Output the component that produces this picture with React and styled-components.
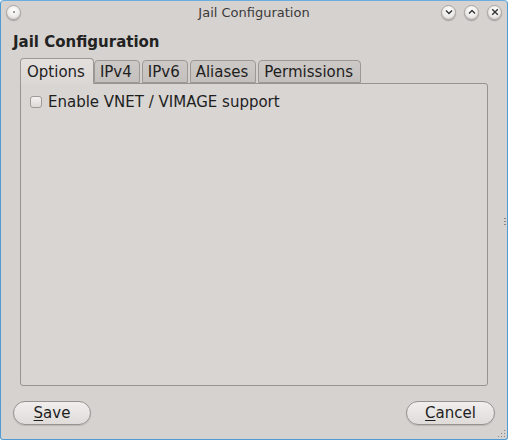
import React, { useState } from 'react';
import styled, { createGlobalStyle } from 'styled-components';

const Global = createGlobalStyle`
  html, body {
    margin: 0;
    padding: 0;
    background: #ffffff;
  }
  body {
    font-family: 'DejaVu Sans', 'Liberation Sans', sans-serif;
  }
`;

const Window = styled.div`
  width: 508px;
  height: 440px;
  box-sizing: border-box;
  border: 1px solid #4e9bd5;
  border-top: 1px solid #6aaedf;
  border-radius: 4px 4px 3px 3px;
  background: #d6d2d0;
  display: flex;
  flex-direction: column;
  position: relative;
  overflow: hidden;
`;

const TitleBar = styled.div`
  height: 22px;
  display: grid;
  grid-template-columns: 1fr auto 1fr;
  align-items: center;
  padding: 0 5px 0 5px;
  font-size: 13px;
  color: #3a3a3a;
`;

const TitleText = styled.div`
  text-align: center;
`;

const LeftButtons = styled.div`
  display: flex;
`;

const RightButtons = styled.div`
  display: flex;
  justify-content: flex-end;
  gap: 8px;
`;

const RoundButton = styled.div`
  width: 15px;
  height: 15px;
  border-radius: 50%;
  box-sizing: border-box;
  border: 1px solid #a9a5a2;
  background: radial-gradient(circle at 50% 35%, #ffffff 0%, #eeecea 55%, #c9c5c2 100%);
  box-shadow: 0 1px 1px rgba(0, 0, 0, 0.25);
  display: flex;
  align-items: center;
  justify-content: center;
  svg {
    display: block;
  }
`;

const Body = styled.div`
  flex: 1;
  display: flex;
  flex-direction: column;
  padding: 8px 12px 14px 12px;
`;

const Heading = styled.div`
  font-weight: bold;
  font-size: 15px;
  color: #222;
  height: 22px;
  line-height: 22px;
`;

const TabsWrap = styled.div`
  display: flex;
  flex-direction: column;
  margin: 5px 7px 0 7px;
  flex: 1;
`;

const TabRow = styled.div`
  display: flex;
  align-items: flex-end;
  height: 25px;
  position: relative;
  z-index: 1;
`;

const Tab = styled.div`
  box-sizing: border-box;
  height: ${p => (p.$active ? '26px' : '23px')};
  margin-bottom: ${p => (p.$active ? '-1px' : '0')};
  margin-right: ${p => (p.$active ? '0' : '2px')};
  padding: 0 ${p => (p.$active ? '8px' : '7px')} 0 ${p => (p.$active ? '6px' : '5px')};
  border: 1px solid #9c9895;
  border-bottom: ${p => (p.$active ? 'none' : '1px solid #9c9895')};
  border-radius: 4px 4px 0 0;
  background: ${p =>
    p.$active
      ? 'linear-gradient(#e3e0de, #dad7d5)'
      : 'linear-gradient(#cdc9c6, #c4c0bd)'};
  font-size: 15px;
  color: #1e1e1e;
  display: flex;
  align-items: center;
  cursor: default;
`;

const Panel = styled.div`
  flex: 1;
  box-sizing: border-box;
  border: 1px solid #979390;
  border-radius: 0 3px 3px 3px;
  background: #d8d5d3;
  padding: 9px 9px;
`;

const CheckRow = styled.label`
  display: flex;
  align-items: center;
  gap: 6px;
  font-size: 15px;
  color: #1e1e1e;
`;

const CheckBox = styled.span`
  width: 12px;
  height: 12px;
  box-sizing: border-box;
  border: 1px solid #9e9a97;
  border-radius: 3px;
  background: linear-gradient(#f4f3f2, #dcd9d7);
`;

const Footer = styled.div`
  display: flex;
  justify-content: space-between;
  margin-top: 15px;
  padding-right: 0;
`;

const PillButton = styled.button`
  height: 24px;
  width: ${p => p.$w}px;
  box-sizing: border-box;
  border: 1px solid #96928f;
  border-radius: 12px;
  background: linear-gradient(#f1efee, #dedbd9);
  box-shadow: 0 1px 1px rgba(0, 0, 0, 0.12);
  font-family: 'DejaVu Sans', 'Liberation Sans', sans-serif;
  font-size: 15px;
  color: #1e1e1e;
  padding: 0;
  u {
    text-decoration: underline;
    text-underline-offset: 2px;
  }
`;

const Grip = styled.div`
  position: absolute;
  right: 2px;
  bottom: 2px;
  width: 8px;
  height: 8px;
  background-image: radial-gradient(circle, #8a8683 0.8px, transparent 1px);
  background-size: 3px 3px;
  clip-path: polygon(100% 0, 100% 100%, 0 100%);
`;

const SideDots = styled.div`
  position: absolute;
  right: 1px;
  top: 216px;
  width: 2px;
  height: 8px;
  background-image: radial-gradient(circle, #8a8683 0.7px, transparent 1px);
  background-size: 2px 3px;
`;

const tabs = ['Options', 'IPv4', 'IPv6', 'Aliases', 'Permissions'];

export default function App() {
  const [active, setActive] = useState(0);
  return (
    <>
      <Global />
      <Window>
        <TitleBar>
          <LeftButtons>
            <RoundButton>
              <svg width="4" height="4" viewBox="0 0 4 4">
                <circle cx="2" cy="2" r="1" fill="#777" />
              </svg>
            </RoundButton>
          </LeftButtons>
          <TitleText>Jail Configuration</TitleText>
          <RightButtons>
            <RoundButton>
              <svg width="8" height="6" viewBox="0 0 8 6">
                <path d="M1 1.5 L4 4.5 L7 1.5" stroke="#333" strokeWidth="1.4" fill="none" />
              </svg>
            </RoundButton>
            <RoundButton>
              <svg width="8" height="6" viewBox="0 0 8 6">
                <path d="M1 4.5 L4 1.5 L7 4.5" stroke="#333" strokeWidth="1.4" fill="none" />
              </svg>
            </RoundButton>
            <RoundButton>
              <svg width="8" height="8" viewBox="0 0 8 8">
                <path d="M1.2 1.2 L6.8 6.8 M6.8 1.2 L1.2 6.8" stroke="#333" strokeWidth="1.4" fill="none" />
              </svg>
            </RoundButton>
          </RightButtons>
        </TitleBar>
        <Body>
          <Heading>Jail Configuration</Heading>
          <TabsWrap>
            <TabRow>
              {tabs.map((t, i) => (
                <Tab key={t} $active={i === active} onClick={() => setActive(i)}>
                  {t}
                </Tab>
              ))}
            </TabRow>
            <Panel>
              {active === 0 && (
                <CheckRow>
                  <CheckBox />
                  Enable VNET / VIMAGE support
                </CheckRow>
              )}
            </Panel>
          </TabsWrap>
          <Footer>
            <PillButton $w={78}>
              <u>S</u>ave
            </PillButton>
            <PillButton $w={89}>
              <u>C</u>ancel
            </PillButton>
          </Footer>
        </Body>
        <SideDots />
        <Grip />
      </Window>
    </>
  );
}
